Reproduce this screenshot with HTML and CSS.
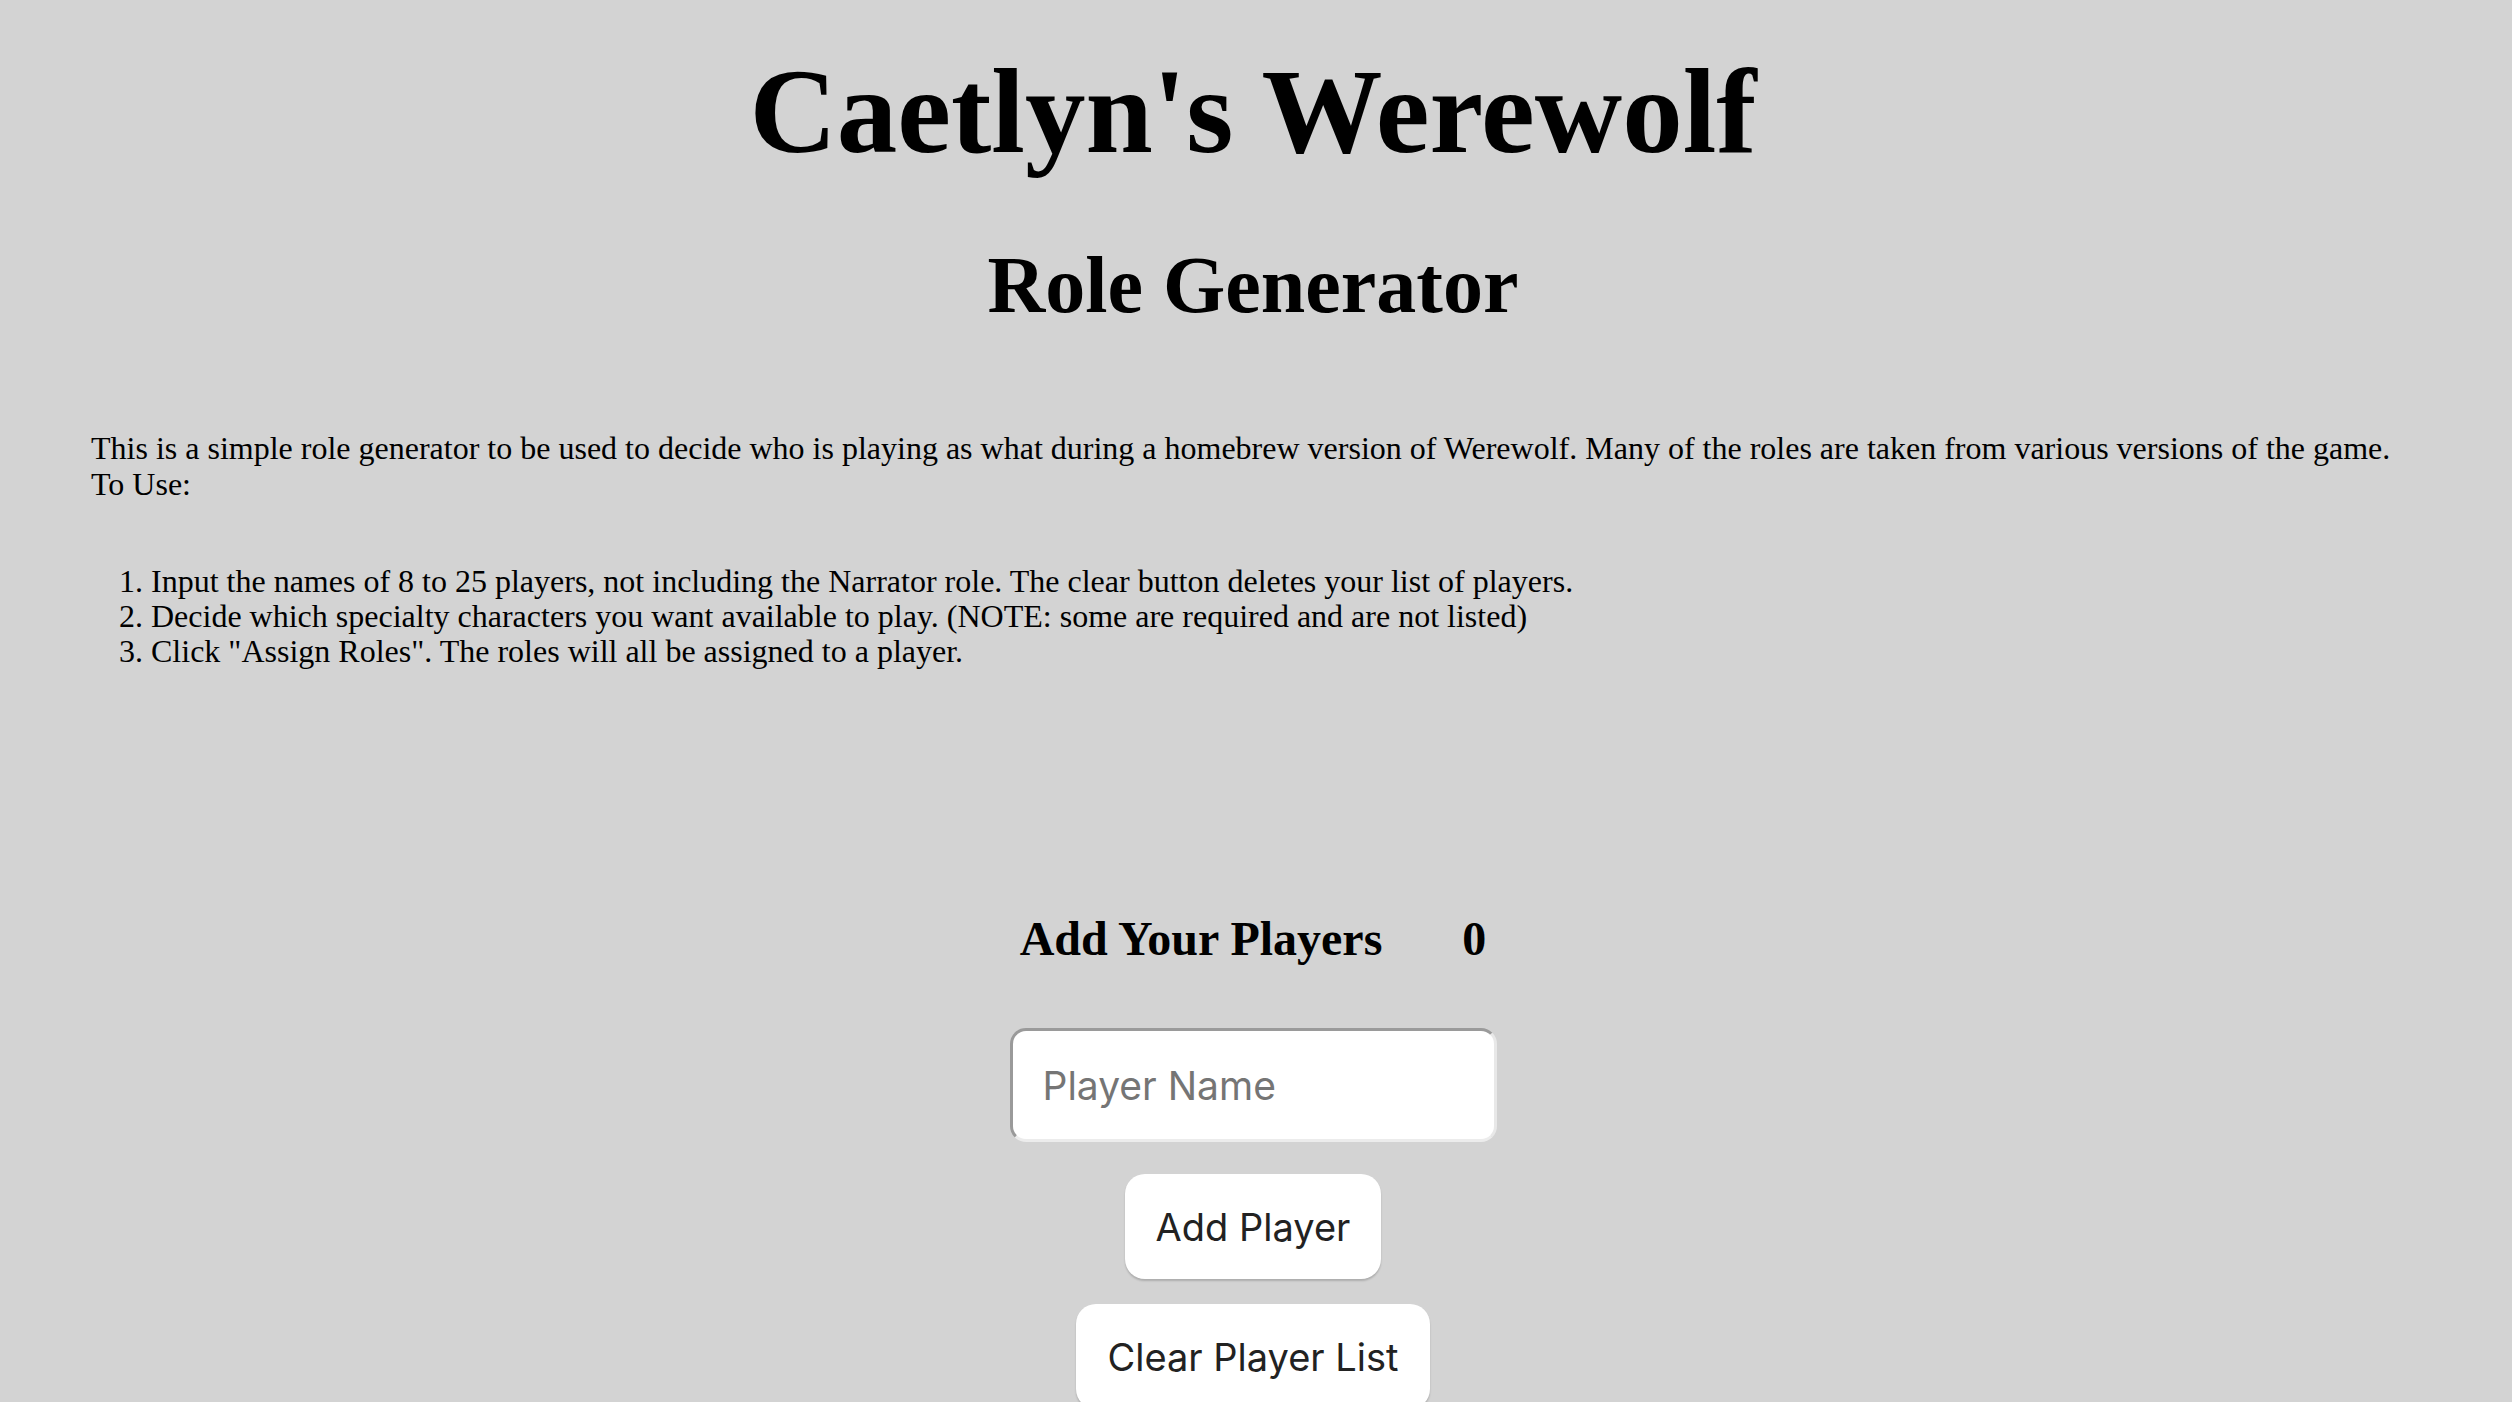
FILE: index.html
```html
<!DOCTYPE html>
<html lang="en">
<head>
<meta charset="utf-8">
<title>Caetlyn's Werewolf</title>
<link rel="stylesheet" href="styles.css">
</head>
<body>
<header class="masthead">
  <h1 class="title">Caetlyn's Werewolf</h1>
  <h2 class="subtitle">Role Generator</h2>
</header>
<main class="content">
  <p class="intro">This is a simple role generator to be used to decide who is playing as what during a homebrew version of Werewolf. Many of the roles are taken from various versions of the game.<br>To Use:</p>
  <ol class="steps">
    <li>Input the names of 8 to 25 players, not including the Narrator role. The clear button deletes your list of players.</li>
    <li>Decide which specialty characters you want available to play. (NOTE: some are required and are not listed)</li>
    <li>Click "Assign Roles". The roles will all be assigned to a player.</li>
  </ol>
  <section class="players">
    <div class="players-head">
      <h3 class="players-title">Add Your Players</h3>
      <span class="players-count">0</span>
    </div>
    <input class="name-input" type="text" placeholder="Player Name">
    <button class="btn btn-add" type="button">Add Player</button>
    <button class="btn btn-clear" type="button">Clear Player List</button>
  </section>
</main>
</body>
</html>
```
FILE: styles.css
```css
html, body {
  margin: 0;
  padding: 0;
}
body {
  background: #d3d3d3;
  color: #000;
  font-family: "Liberation Serif", "Times New Roman", serif;
  overflow: hidden;
}
.masthead {
  text-align: center;
  padding-right: 6px;
}
.title {
  margin: 38px 0 0;
  font-size: 121px;
  line-height: 147px;
  font-weight: bold;
}
.subtitle {
  margin: 54px 0 0;
  font-size: 80px;
  line-height: 92px;
  font-weight: bold;
}
.content {
  padding: 0 91px;
}
.intro {
  margin: 99px 0 0;
  font-size: 32px;
  line-height: 36px;
}
.steps {
  margin: 62px 0 0;
  padding-left: 60px;
  font-size: 32px;
  line-height: 35px;
}
.players {
  display: flex;
  flex-direction: column;
  align-items: center;
  margin-top: 242px;
  margin-right: -85px;
  margin-left: -91px;
}
.players-head {
  display: flex;
  align-items: baseline;
  gap: 80px;
  font-size: 48px;
  line-height: 55px;
  font-weight: bold;
}
.players-title {
  margin: 0;
  font-size: 48px;
  font-weight: bold;
}
.players-count {
  font-weight: bold;
}
.name-input {
  margin-top: 62px;
  box-sizing: border-box;
  width: 487px;
  height: 114px;
  padding: 0 30px;
  border-style: solid;
  border-width: 3px;
  border-color: #9a9a9a #e8e8e8 #ececec #9a9a9a;
  border-radius: 16px;
  background: #fff;
  font-family: Inter, "Noto Sans", sans-serif;
  font-size: 39px;
  color: #222;
  outline: none;
}
.name-input::placeholder {
  color: #757575;
}
.btn {
  box-sizing: border-box;
  height: 105px;
  padding: 0 31px;
  border: none;
  border-radius: 20px;
  background: #fff;
  box-shadow: 0 2px 2px rgba(0, 0, 0, 0.18);
  font-family: Inter, "Noto Sans", sans-serif;
  font-size: 38px;
  color: #222;
}
.btn-add {
  margin-top: 32px;
}
.btn-clear {
  margin-top: 25px;
}
```
